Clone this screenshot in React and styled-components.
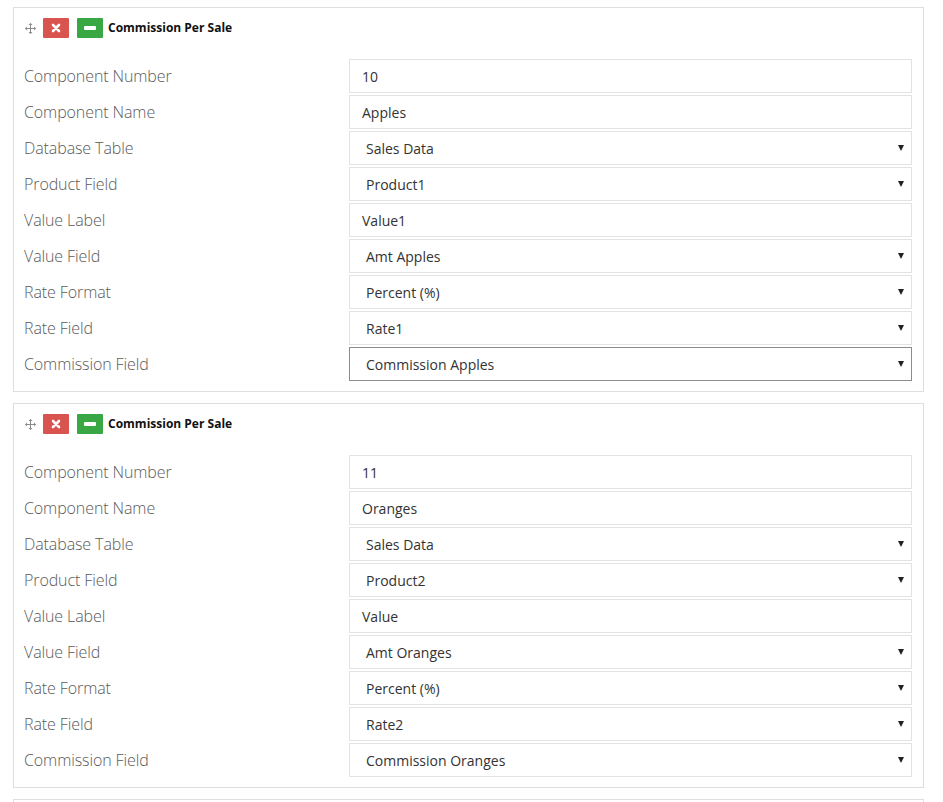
import React from 'react'
import styled, { createGlobalStyle } from 'styled-components'

const GlobalStyle = createGlobalStyle`
body{
    margin:0;
    background:#fff;
    font-family:"Open Sans", "Liberation Sans", sans-serif;
}
`

const components = [
    {
        number: '10', name: 'Apples', table: 'Sales Data', product: 'Product1', valueLabel: 'Value1',
        valueField: 'Amt Apples', rateFormat: 'Percent (%)', rateField: 'Rate1', commission: 'Commission Apples',
        focused: true,
    },
    {
        number: '11', name: 'Oranges', table: 'Sales Data', product: 'Product2', valueLabel: 'Value',
        valueField: 'Amt Oranges', rateFormat: 'Percent (%)', rateField: 'Rate2', commission: 'Commission Oranges',
    },
]

function MoveIcon() {
    return (
        <svg width="11" height="11" viewBox="0 0 11 11">
            <g fill="none" stroke="#8a8a8a" strokeWidth="1">
                <path d="M5.5 0.5v10M0.5 5.5h10" />
            </g>
            <g fill="#8a8a8a">
                <path d="M5.5 0l2 2h-4zM5.5 11l2-2h-4zM0 5.5l2-2v4zM11 5.5l-2-2v4z" />
            </g>
        </svg>
    )
}

function Field({ label, value, select, focused }) {
    return (
        <Row>
            <Label>{label}</Label>
            {select ? (
                <SelectBox focused={focused}>
                    <span>{value}</span>
                    <Caret />
                </SelectBox>
            ) : (
                <InputBox>{value}</InputBox>
            )}
        </Row>
    )
}

function ComponentPanel({ c }) {
    return (
        <Panel>
            <Header>
                <Handle><MoveIcon /></Handle>
                <RemoveBtn>
                    <svg width="10" height="10" viewBox="0 0 10 10">
                        <path d="M2 2L8 8M8 2L2 8" stroke="#fff" strokeWidth="2.6" strokeLinecap="round" />
                    </svg>
                </RemoveBtn>
                <CollapseBtn>
                    <svg width="12" height="4" viewBox="0 0 12 4">
                        <rect x="0" y="0" width="12" height="4" rx="1" fill="#fff" />
                    </svg>
                </CollapseBtn>
                <Title>Commission Per Sale</Title>
            </Header>
            <Fields>
                <Field label="Component Number" value={c.number} />
                <Field label="Component Name" value={c.name} />
                <Field label="Database Table" value={c.table} select />
                <Field label="Product Field" value={c.product} select />
                <Field label="Value Label" value={c.valueLabel} />
                <Field label="Value Field" value={c.valueField} select />
                <Field label="Rate Format" value={c.rateFormat} select />
                <Field label="Rate Field" value={c.rateField} select />
                <Field label="Commission Field" value={c.commission} select focused={c.focused} />
            </Fields>
        </Panel>
    )
}

export default function App() {
    return (
        <>
            <GlobalStyle />
            <Page>
                {components.map((c) => (
                    <ComponentPanel key={c.number} c={c} />
                ))}
                <Panel />
            </Page>
        </>
    )
}

const Page = styled.div`
padding:7px 19px 0 13px;
display:flex;
flex-direction:column;
gap:11px;
height:802px;
box-sizing:border-box;
overflow:hidden;
`
const Panel = styled.div`
border:1px solid #dedede;
padding:10px 11px 10px 10px;
min-height:40px;
flex-shrink:0;
`
const Header = styled.div`
display:flex;
align-items:center;
height:20px;
margin-bottom:21px;
`
const Handle = styled.span`
display:flex;
align-items:center;
width:18px;
padding-left:1px;
`
const Btn = styled.span`
display:flex;
align-items:center;
justify-content:center;
width:26px;
height:20px;
border-radius:1px;
margin-right:8px;
`
const RemoveBtn = styled(Btn)`
background:#d9534f;
`
const CollapseBtn = styled(Btn)`
background:#3aa745;
margin-right:5px;
`
const Title = styled.span`
font-size:12px;
font-weight:700;
color:#111;
margin-top:-1px;
`
const Fields = styled.div`
display:flex;
flex-direction:column;
gap:2px;
`
const Row = styled.div`
display:grid;
grid-template-columns:325px 1fr;
align-items:center;
height:34px;
`
const Label = styled.div`
font-size:16px;
font-weight:300;
color:#5a5a5a;
letter-spacing:-0.1px;
`
const InputBox = styled.div`
height:34px;
box-sizing:border-box;
border:1px solid #e3e3e3;
padding:0 12px;
display:flex;
align-items:center;
font-size:14px;
color:#333;
`
const SelectBox = styled(InputBox)`
justify-content:space-between;
padding:0 7px 0 16px;
border-color:${(p) => (p.focused ? '#8c8c8c' : '#e3e3e3')};
`
const Caret = styled.span`
width:0;
height:0;
border-left:3.5px solid transparent;
border-right:3.5px solid transparent;
border-top:6px solid #222;
`
